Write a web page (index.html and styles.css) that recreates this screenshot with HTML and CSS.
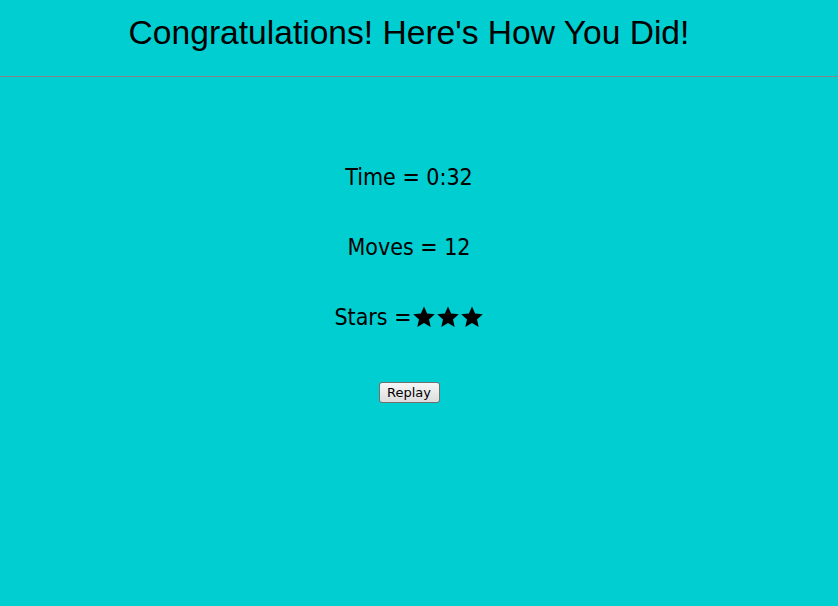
FILE: index.html
```html
<!DOCTYPE html>
<html>
<head>
<meta charset="utf-8">
<link rel="stylesheet" href="styles.css">
</head>
<body>
<header class="top">
  <h1 class="title">Congratulations! Here's How You Did!</h1>
</header>
<main class="results">
  <p class="stat">Time = 0:32</p>
  <p class="stat">Moves = 12</p>
  <p class="stat stars">Stars =<span class="star-row"><svg viewBox="0 0 24 24" width="24" height="24"><path d="M12 1.5l3.1 7.1 7.7.7-5.8 5.1 1.7 7.6L12 18l-6.7 4 1.7-7.6-5.8-5.1 7.7-.7z"/></svg><svg viewBox="0 0 24 24" width="24" height="24"><path d="M12 1.5l3.1 7.1 7.7.7-5.8 5.1 1.7 7.6L12 18l-6.7 4 1.7-7.6-5.8-5.1 7.7-.7z"/></svg><svg viewBox="0 0 24 24" width="24" height="24"><path d="M12 1.5l3.1 7.1 7.7.7-5.8 5.1 1.7 7.6L12 18l-6.7 4 1.7-7.6-5.8-5.1 7.7-.7z"/></svg></span></p>
  <button class="replay">Replay</button>
</main>
</body>
</html>
```
FILE: styles.css
```css
html, body {
  margin: 0;
  padding: 0;
  background: #00ced1;
  height: 100%;
}
body {
  font-family: "Liberation Sans", Arial, sans-serif;
}
.top {
  height: 76px;
  border-bottom: 1px solid #858585;
  padding-right: 20px;
}
.title {
  margin: 0;
  padding-top: 14px;
  text-align: center;
  font-weight: normal;
  font-size: 33.6px;
  line-height: 38px;
  color: #000;
}
.results {
  display: flex;
  flex-direction: column;
  align-items: center;
  padding-top: 88px;
  padding-right: 20px;
}
.stat {
  margin: 0 0 46px 0;
  font-family: "DejaVu Sans Condensed", "DejaVu Sans", sans-serif;
  font-size: 23px;
  line-height: 24px;
  color: #000;
}
.stars {
  display: flex;
  align-items: center;
}
.star-row {
  display: flex;
}
.star-row svg {
  display: block;
  fill: #000;
}
.replay {
  margin-top: 7px;
  width: 61px;
  height: 21px;
  padding: 0;
  font-family: "DejaVu Sans", Tahoma, sans-serif;
  font-size: 13px;
  color: #000;
  background: linear-gradient(#f6f6f6, #dddddd);
  border: 1px solid #707070;
  border-radius: 3px;
}
```
